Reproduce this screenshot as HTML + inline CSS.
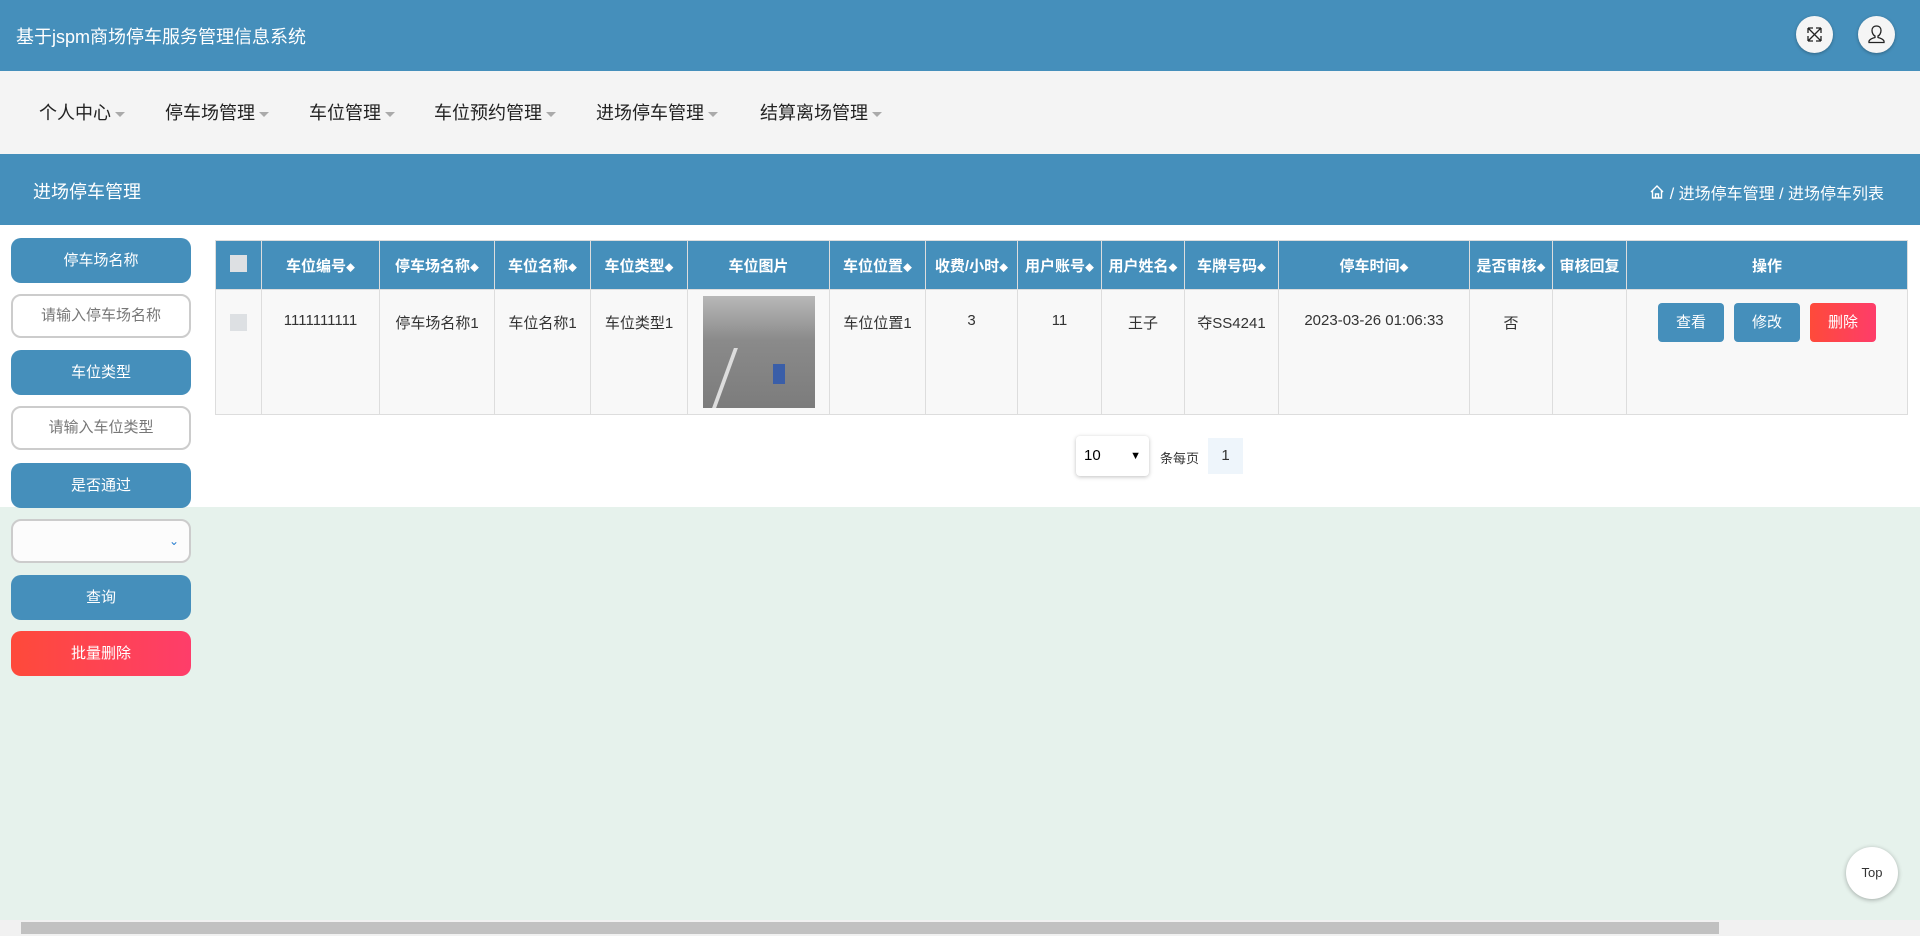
<!DOCTYPE html>
<html><head><meta charset="utf-8"><style>
*{margin:0;padding:0;box-sizing:border-box}
body{width:1920px;height:936px;overflow:hidden;background:#e6f2ec;font-family:"Liberation Sans","Noto Sans CJK SC",sans-serif;position:relative}
.hdr{position:absolute;left:0;top:0;width:1920px;height:71px;background:#458fbb;color:#fff}
.hdr .t{position:absolute;left:16px;top:23px;font-size:18px}
.ic{position:absolute;top:16px;width:37px;height:37px;border-radius:50%;background:#f5f5f5;box-shadow:0 1px 3px rgba(0,0,0,.3)}
.nav{position:absolute;top:71px;left:0;width:1920px;height:83px;background:#f4f4f4}
.nav span{position:absolute;top:28px;font-size:18px;color:#222}
.nav span:after{content:"";display:inline-block;margin-left:4px;vertical-align:middle;border-left:5px solid transparent;border-right:5px solid transparent;border-top:5px solid #aaa}
.sub{position:absolute;top:154px;left:0;width:1920px;height:71px;background:#458fbb;color:#fff}
.sub .l{position:absolute;left:33px;top:24px;font-size:18px}
.sub .r{position:absolute;right:36px;top:26px;font-size:16px}
.white{position:absolute;top:225px;left:0;width:1920px;height:282px;background:#fff}
.sb{position:absolute;left:11px;width:180px;height:45px;border-radius:10px;color:#fff;font-size:15px;text-align:center;line-height:45px}
.b{background:#458fbb}
.in{background:#fff;border:2px solid #ccc;color:#777;height:44px;line-height:40px}
table{position:absolute;left:215px;top:240px;width:1693px;border-collapse:collapse;font-size:15px}
th{background:#458fbb;color:#fff;height:49px;border:1px solid #ddd;font-weight:bold;font-size:15px;white-space:nowrap}
td{background:#f8f8f8;border:1px solid #ddd;height:125px;vertical-align:top;text-align:center;padding-top:22px;color:#333}
.ar{font-size:9px}
.cb{display:inline-block;width:17px;height:17px;background:#dde0e3}
.btn{display:inline-block;width:66px;height:39px;line-height:39px;border-radius:4px;color:#fff;margin:0 5px;font-size:15px}
</style></head><body>
<div class="hdr"><div class="t">基于jspm商场停车服务管理信息系统</div>
<div class="ic" style="left:1796px"><svg width="37" height="37" viewBox="0 0 37 37" fill="none" stroke="#222" stroke-width="1.3"><path d="M12 12L25 25M25 12L12 25M12 12h5M12 12v5M25 12h-5M25 12v5M12 25h5M12 25v-5M25 25h-5M25 25v-5"/></svg></div>
<div class="ic" style="left:1858px"><svg width="37" height="37" viewBox="0 0 37 37" fill="none" stroke="#222" stroke-width="1.3"><path d="M18.5 10c-3 0-4.5 2-4.5 4.5s1.5 5 3 5.5v1.5c-2 .5-5 1.5-6 3.5v1.5h15V25c-1-2-4-3-6-3.5V20c1.5-.5 3-3 3-5.5S21.5 10 18.5 10z"/></svg></div>
</div>
<div class="nav">
<span style="left:39px">个人中心</span><span style="left:165px">停车场管理</span><span style="left:309px">车位管理</span><span style="left:434px">车位预约管理</span><span style="left:596px">进场停车管理</span><span style="left:760px">结算离场管理</span>
</div>
<div class="sub"><div class="l">进场停车管理</div><div class="r"><svg width="16" height="16" viewBox="0 0 16 16" fill="none" stroke="#fff" stroke-width="1.4" style="vertical-align:-1px"><path d="M2 8L8 2l6 6M3.5 6.5V14h9V6.5M6.5 14V10h3v4"/></svg> / 进场停车管理 / 进场停车列表</div></div>
<div class="white"></div>
<div class="sb b" style="top:238px">停车场名称</div>
<div class="sb in" style="top:294px">请输入停车场名称</div>
<div class="sb b" style="top:350px">车位类型</div>
<div class="sb in" style="top:406px">请输入车位类型</div>
<div class="sb b" style="top:463px">是否通过</div>
<div class="sb in" style="top:519px;background:#fcfcfc;text-align:right;padding-right:10px;color:#2a7fd0;font-size:12px">⌄</div>
<div class="sb b" style="top:575px">查询</div>
<div class="sb" style="top:631px;background:linear-gradient(90deg,#fe4a3a,#fe3d6a)">批量删除</div>
<table>
<tr><th style="width:46px"><span class="cb"></span></th><th style="width:118px">车位编号<span class="ar">◆</span></th><th style="width:115px">停车场名称<span class="ar">◆</span></th><th style="width:96px">车位名称<span class="ar">◆</span></th><th style="width:97px">车位类型<span class="ar">◆</span></th><th style="width:142px">车位图片</th><th style="width:96px">车位位置<span class="ar">◆</span></th><th style="width:92px">收费/小时<span class="ar">◆</span></th><th style="width:84px">用户账号<span class="ar">◆</span></th><th style="width:83px">用户姓名<span class="ar">◆</span></th><th style="width:94px">车牌号码<span class="ar">◆</span></th><th style="width:191px">停车时间<span class="ar">◆</span></th><th style="width:83px">是否审核<span class="ar">◆</span></th><th style="width:74px">审核回复</th><th>操作</th></tr>
<tr><td style="padding-top:24px"><span class="cb"></span></td><td>1111111111</td><td>停车场名称1</td><td>车位名称1</td><td>车位类型1</td><td style="padding-top:6px"><div style="width:112px;height:112px;margin:0 auto;background:linear-gradient(180deg,#b8b8b8 0%,#8a8a8a 40%,#7c7c7c 100%);position:relative"><div style="position:absolute;left:20px;bottom:0;width:4px;height:60px;background:#ddd;transform:skewX(-20deg)"></div><div style="position:absolute;left:70px;top:68px;width:12px;height:20px;background:#3a5ea8"></div></div></td><td>车位位置1</td><td>3</td><td>11</td><td>王子</td><td>夺SS4241</td><td>2023-03-26 01:06:33</td><td>否</td><td></td><td style="padding-top:13px"><span class="btn b">查看</span><span class="btn b">修改</span><span class="btn" style="background:linear-gradient(90deg,#fe4a3a,#fe3d6a)">删除</span></td></tr>
</table>
<div style="position:absolute;left:1076px;top:436px;width:73px;height:40px;border-radius:4px;background:#fff;box-shadow:0 1px 4px rgba(0,0,0,.25);font-size:15px;line-height:40px;padding-left:8px">10<span style="position:absolute;right:8px;font-size:11px">▼</span></div>
<div style="position:absolute;left:1160px;top:448px;font-size:13px;color:#333">条每页</div>
<div style="position:absolute;left:1208px;top:438px;width:35px;height:36px;background:#eef5fb;font-size:15px;line-height:36px;text-align:center;color:#333">1</div>
<div style="position:absolute;left:1846px;top:847px;width:52px;height:52px;border-radius:50%;background:#fff;box-shadow:0 1px 5px rgba(0,0,0,.3);text-align:center;line-height:52px;font-size:13px;color:#333">Top</div>
<div style="position:absolute;left:0;top:920px;width:1920px;height:16px;background:#f1f1f1"><div style="position:absolute;left:21px;top:2px;width:1698px;height:12px;background:#c1c1c1"></div></div>
</body></html>
